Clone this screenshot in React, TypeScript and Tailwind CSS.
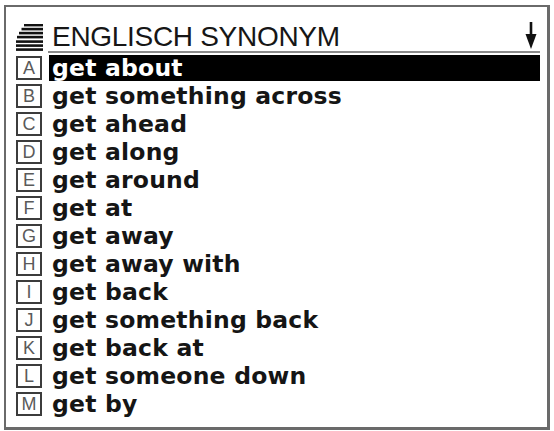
const entries = [
  { key: "A", text: "get about" },
  { key: "B", text: "get something across" },
  { key: "C", text: "get ahead" },
  { key: "D", text: "get along" },
  { key: "E", text: "get around" },
  { key: "F", text: "get at" },
  { key: "G", text: "get away" },
  { key: "H", text: "get away with" },
  { key: "I", text: "get back" },
  { key: "J", text: "get something back" },
  { key: "K", text: "get back at" },
  { key: "L", text: "get someone down" },
  { key: "M", text: "get by" },
];

// stacked bars icon in front of the dictionary title
function StackIcon() {
  const bars = [
    { y: 1, x: 8 },
    { y: 5, x: 5.5 },
    { y: 9, x: 3 },
    { y: 13, x: 1 },
    { y: 17.5, x: 0 },
    { y: 21.5, x: 0 },
    { y: 25.5, x: 0 },
  ];
  return (
    <svg width="27" height="28" viewBox="0 0 27 28" className="shrink-0 mb-[1px]">
      {bars.map((b) => (
        <rect key={b.y} x={b.x} y={b.y - 1.2} width={27 - b.x} height="2.6" fill="#111" />
      ))}
    </svg>
  );
}

function DownArrow() {
  return (
    <svg width="14" height="28" viewBox="0 0 14 28" className="shrink-0 mb-[1px]">
      <rect x="5.7" y="0" width="2.6" height="16" fill="#111" />
      <polygon points="1.5,12 12.5,12 7,27" fill="#111" />
    </svg>
  );
}

export default function App() {
  return (
    <div className="w-[554px] h-[431px] bg-white pt-[5px] pl-[4px]">
      <div className="w-[546px] h-[425px] border-2 border-r-[3px] border-b-[3px] border-[#6a6a6a] pl-[10px] pr-[7px] pt-[15px]">
        <div className="flex items-end h-[31px]">
          <StackIcon />
          <div className="flex-1 ml-[5px] flex items-end justify-between border-b-2 border-[#8a8a8a] h-[31px] pr-[2px]">
            <span className="font-['Liberation_Sans',sans-serif] text-[28px] leading-[28px] tracking-[-0.3px] text-[#161616] ml-[4px]">
              ENGLISCH SYNONYM
            </span>
            <DownArrow />
          </div>
        </div>
        <div className="mt-[1px]">
          {entries.map((e, i) => (
            <div key={e.key} className="flex items-center h-[28px]">
              <div className="w-[26px] h-[24px] shrink-0 border-2 border-[#3c3c3c] flex items-center justify-center font-['Liberation_Sans',sans-serif] text-[18px] leading-none text-[#5a5a5a]">
                {e.key}
              </div>
              <div
                className={
                  "flex-1 ml-[7px] h-[26px] flex items-center pl-[3px] font-['DejaVu_Sans',sans-serif] font-bold text-[23.5px] leading-[26px] tracking-[0.2px] " +
                  (i === 0 ? "bg-black text-white" : "text-[#151515]")
                }
              >
                {e.text}
              </div>
            </div>
          ))}
        </div>
      </div>
    </div>
  );
}
